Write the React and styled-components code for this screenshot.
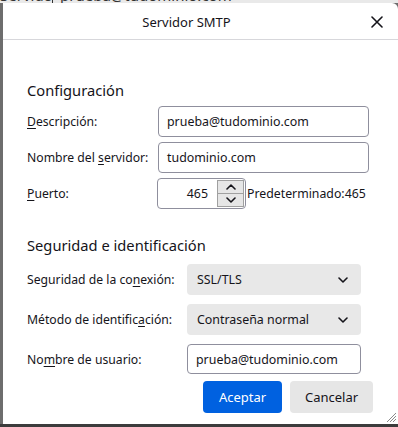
import React from "react";
import styled, { createGlobalStyle } from "styled-components";

const GlobalStyle = createGlobalStyle`
  html, body {
    margin: 0;
    padding: 0;
    width: 398px;
    height: 427px;
    overflow: hidden;
    background: #ffffff;
    font-family: "Noto Sans", "Open Sans", sans-serif;
    color: #15141a;
  }
`;

const Screen = styled.div`
  width: 398px;
  height: 427px;
  display: flex;
  flex-direction: column;
  background: #6d6d6d;
`;

const TopStrip = styled.div`
  height: 3px;
  overflow: hidden;
  background: #e9e9e9;
  flex-shrink: 0;
`;

const BehindRow = styled.div`
  margin-top: -14px;
  display: flex;
  align-items: stretch;
  font-size: 15px;
  line-height: 18px;
  white-space: nowrap;
  color: #333;
`;

const BehindCell = styled.div`
  width: ${(p) => p.$w}px;
  overflow: hidden;
  padding-left: ${(p) => (p.$sep ? 7 : 0)}px;
  border-left: ${(p) => (p.$sep ? "1px solid #333" : "none")};
`;

const Middle = styled.div`
  flex: 1;
  display: flex;
  min-height: 0;
`;

const LeftEdge = styled.div`
  width: 3px;
  background: #6d6d6d;
  flex-shrink: 0;
`;

const Dialog = styled.div`
  flex: 1;
  min-width: 0;
  background: #fff;
  border-top-right-radius: 6px;
  display: flex;
  flex-direction: column;
  position: relative;
`;

const BottomEdge = styled.div`
  height: 3px;
  background: #3c3c3c;
  flex-shrink: 0;
`;

const Header = styled.div`
  height: 36px;
  border-bottom: 1px solid #d7d7db;
  display: flex;
  align-items: center;
  justify-content: center;
  position: relative;
`;

const Title = styled.div`
  font-size: 13px;
  margin-left: -28px;
  padding-top: 2px;
`;

const CloseButton = styled.button`
  position: absolute;
  right: 13px;
  top: 11px;
  width: 16px;
  height: 16px;
  padding: 0;
  border: none;
  background: none;
  display: flex;
  align-items: center;
  justify-content: center;
`;

const Content = styled.div`
  padding: 40px 29px 0 24px;
  display: flex;
  flex-direction: column;
`;

const SectionTitle = styled.div`
  font-size: 14.7px;
  line-height: 20px;
  margin-top: ${(p) => p.$top || 0}px;
`;

const FormGrid = styled.div`
  display: grid;
  grid-template-columns: ${(p) => p.$label}px minmax(0, 1fr);
  row-gap: ${(p) => p.$gap}px;
  align-items: center;
  margin-top: ${(p) => p.$top}px;
`;

const Label = styled.label`
  font-size: 12.2px;
  white-space: nowrap;

  u {
    text-decoration: underline;
    text-underline-offset: 2px;
  }
`;

const TextBox = styled.div`
  height: ${(p) => p.$h || 31}px;
  box-sizing: border-box;
  border: 1px solid #8f8f9d;
  border-radius: 4px;
  padding: 0 8px;
  display: flex;
  align-items: center;
  font-size: 12.4px;
  width: ${(p) => (p.$w ? `${p.$w}px` : "auto")};
`;

const PortRow = styled.div`
  display: flex;
  align-items: center;
  margin-left: -1px;
`;

const SpinBox = styled.div`
  width: 89px;
  height: 31px;
  box-sizing: border-box;
  border: 1px solid #8f8f9d;
  border-radius: 4px;
  display: flex;
  align-items: center;
  justify-content: space-between;
  padding: 1px 1px 1px 0;
`;

const SpinValue = styled.div`
  flex: 1;
  text-align: right;
  padding-right: 9px;
  font-size: 12.4px;
`;

const Spinner = styled.div`
  width: 27px;
  height: 100%;
  display: flex;
  flex-direction: column;
  border: 1px solid #a0a0a0;
  box-sizing: border-box;
  background: #e6e6e6;
`;

const SpinButton = styled.div`
  flex: 1;
  display: flex;
  align-items: center;
  justify-content: center;
  border-top: ${(p) => (p.$bottom ? "1px solid #a0a0a0" : "none")};
`;

const DefaultText = styled.div`
  font-size: 12.3px;
  margin-left: 1px;
`;

const Select = styled.div`
  width: 174px;
  height: 31px;
  box-sizing: border-box;
  background: #e8e8e8;
  border-radius: 4px;
  padding: 0 13px 0 10px;
  display: flex;
  align-items: center;
  justify-content: space-between;
  font-size: 12.4px;
`;

const Buttons = styled.div`
  display: flex;
  justify-content: flex-end;
  gap: 8px;
  margin-top: 7px;
  margin-right: -4px;
`;

const Button = styled.button`
  height: 32px;
  width: ${(p) => p.$w}px;
  border: none;
  border-radius: 4px;
  font-family: inherit;
  font-size: 13px;
  background: ${(p) => (p.$primary ? "#0061e0" : "#e6e6e6")};
  color: ${(p) => (p.$primary ? "#fff" : "#15141a")};
`;

const Grip = styled.svg`
  position: absolute;
  right: 1px;
  bottom: 1px;
`;

const Chevron = ({ up, size = 10 }) => (
  <svg width={size} height={size * 0.6} viewBox="0 0 10 6">
    <path
      d={up ? "M1 5 L5 1 L9 5" : "M1 1 L5 5 L9 1"}
      fill="none"
      stroke="#15141a"
      strokeWidth="1.6"
      strokeLinecap="round"
      strokeLinejoin="round"
    />
  </svg>
);

const App = () => {
  return (
    <>
      <GlobalStyle />
      <Screen>
        <TopStrip>
          <BehindRow>
            <BehindCell $w={52}>Servidor:</BehindCell>
            <BehindCell $w={200} $sep>
              prueba@tudominio.com
            </BehindCell>
          </BehindRow>
        </TopStrip>
        <Middle>
          <LeftEdge />
          <Dialog>
            <Header>
              <Title>Servidor SMTP</Title>
              <CloseButton>
                <svg width="12" height="12" viewBox="0 0 12 12">
                  <path
                    d="M1 1 L11 11 M11 1 L1 11"
                    stroke="#15141a"
                    strokeWidth="1.6"
                    strokeLinecap="round"
                  />
                </svg>
              </CloseButton>
            </Header>
            <Content>
              <SectionTitle>Configuración</SectionTitle>
              <FormGrid $label={131} $gap={5} $top={6}>
                <Label>
                  <u>D</u>escripción:
                </Label>
                <TextBox>prueba@tudominio.com</TextBox>
                <Label>
                  Nombre del <u>s</u>ervidor:
                </Label>
                <TextBox>tudominio.com</TextBox>
                <Label>
                  <u>P</u>uerto:
                </Label>
                <PortRow>
                  <SpinBox>
                    <SpinValue>465</SpinValue>
                    <Spinner>
                      <SpinButton>
                        <Chevron up />
                      </SpinButton>
                      <SpinButton $bottom>
                        <Chevron />
                      </SpinButton>
                    </Spinner>
                  </SpinBox>
                  <DefaultText>Predeterminado:465</DefaultText>
                </PortRow>
              </FormGrid>

              <SectionTitle $top={26}>Seguridad e identificación</SectionTitle>
              <FormGrid $label={160} $gap={9} $top={9}>
                <Label>
                  Seguridad de la co<u>n</u>exión:
                </Label>
                <Select>
                  SSL/TLS
                  <Chevron />
                </Select>
                <Label>
                  Método de identific<u>a</u>ción:
                </Label>
                <Select>
                  Contraseña normal
                  <Chevron />
                </Select>
                <Label>
                  No<u>m</u>bre de usuario:
                </Label>
                <TextBox $w={174} $h={30}>
                  prueba@tudominio.com
                </TextBox>
              </FormGrid>

              <Buttons>
                <Button $primary $w={79}>
                  Aceptar
                </Button>
                <Button $w={83}>Cancelar</Button>
              </Buttons>
            </Content>
            <Grip width="12" height="12" viewBox="0 0 12 12">
              <path
                d="M11 2 L2 11 M11 5 L5 11 M11 8 L8 11"
                stroke="#8a8a8a"
                strokeWidth="1"
              />
            </Grip>
          </Dialog>
        </Middle>
        <BottomEdge />
      </Screen>
    </>
  );
};

export default App;
